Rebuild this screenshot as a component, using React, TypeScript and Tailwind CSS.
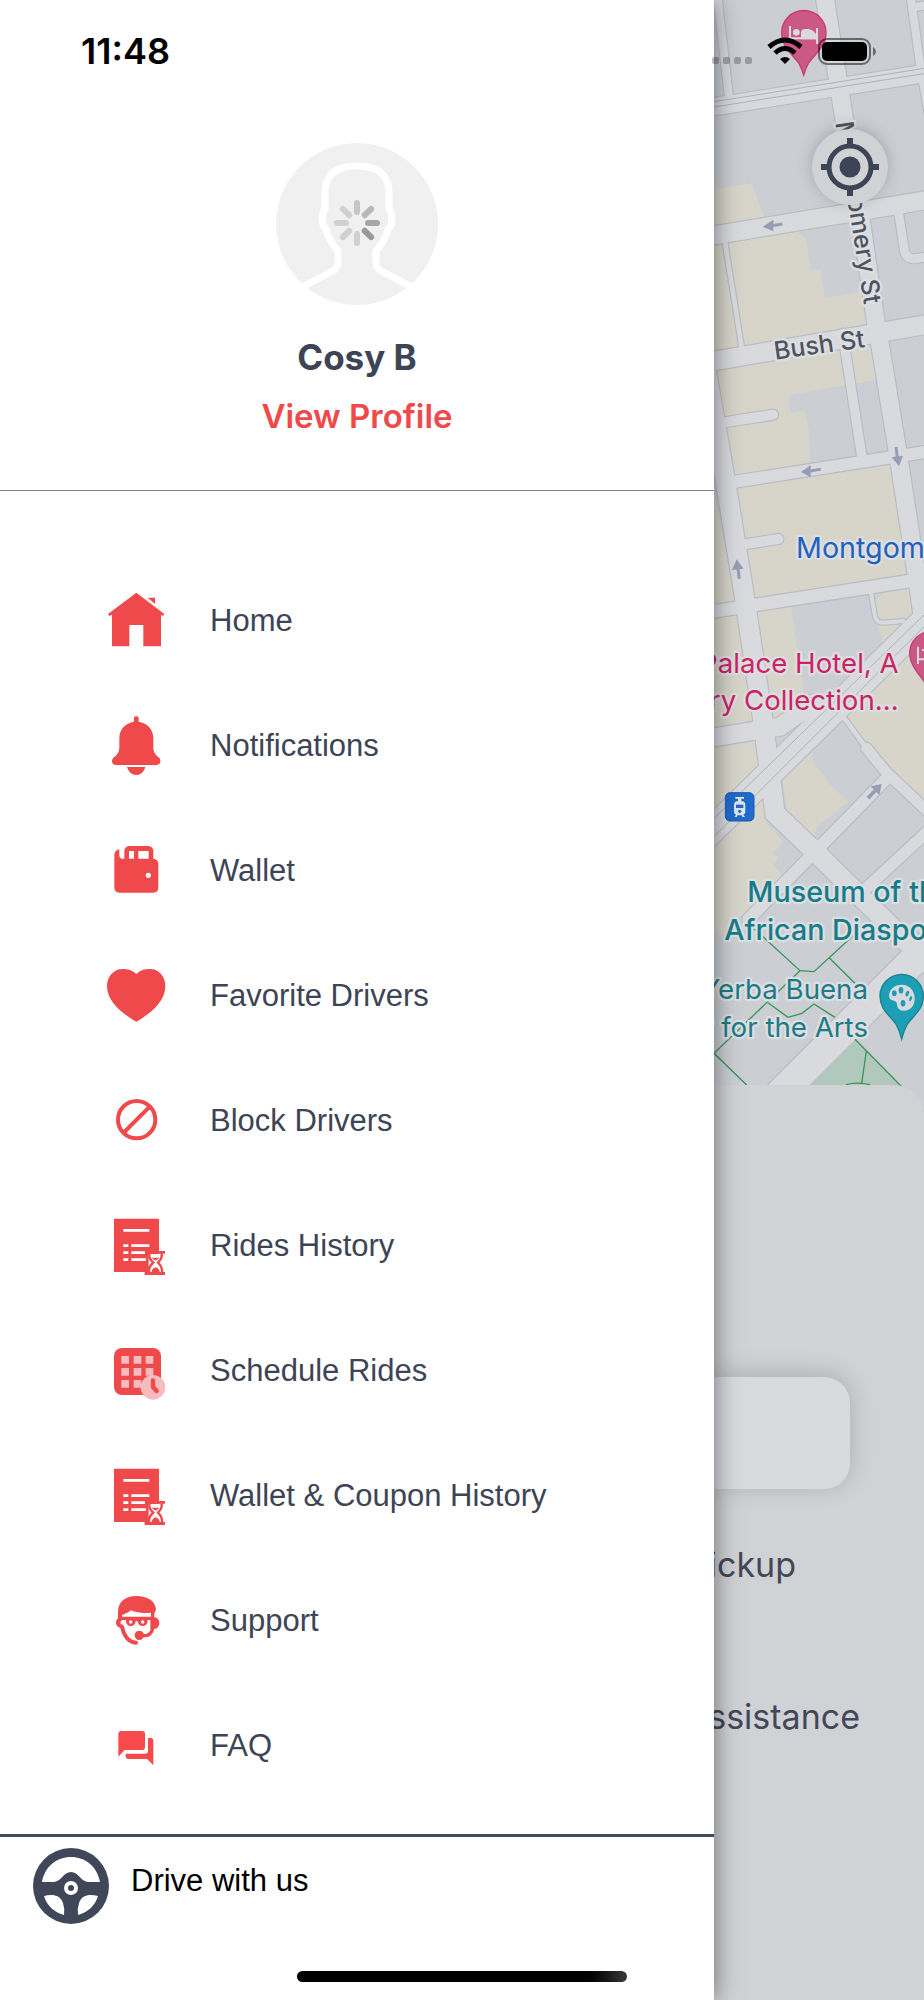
import React from "react";

const RED = "#f0494c";
const NAVY = "#3d4455";

function HomeIcon() {
  return (
    <svg viewBox="48 63 180 180" className="size-[60px] shrink-0" fill={RED} aria-hidden="true">
      <path d="M139 68 223 132 219 138 213 134V229H160V165H118V229H66V134L58 138 54 132Z" />
      <path d="M173 83H195V102Z" />
    </svg>
  );
}

function BellIcon() {
  return (
    <svg viewBox="48 438 180 180" className="size-[60px] shrink-0" fill={RED} aria-hidden="true">
      <path d="M132 455V443Q133 439 139 439T146 443V455C172 459 190 478 190 505V533C190 546 198 556 206 562Q212 567 211 575 210 585 198 585H79Q67 585 66 575 65 567 72 562C80 556 88 546 88 533V505C88 478 106 459 132 455Z" />
      <path d="M111 591H166C162 606 151 615 139 615S115 606 111 591Z" />
    </svg>
  );
}

function WalletIcon() {
  return (
    <svg viewBox="48 813 180 180" className="size-[60px] shrink-0" fill={RED} aria-hidden="true">
      <path
        fillRule="evenodd"
        d="M73 852Q75 841 88 838V857Q89 866 97 866H103V843Q104 829 118 828H175Q189 829 190 843V866Q204 868 205 881V954Q204 968 190 968H88Q74 968 73 954ZM117 843V866H132V843ZM145 843V866H176V843ZM175 908a8 8 0 1 0 .1 0Z"
      />
    </svg>
  );
}

function HeartIcon() {
  return (
    <svg viewBox="48 78 180 180" className="size-[60px] shrink-0" fill={RED} aria-hidden="true">
      <path d="M139 102C151 90 165 87 180 87 207 87 226 110 226 138 226 180 190 216 139 245 88 216 51 180 51 138 51 110 71 87 98 87 113 87 127 90 139 102Z" />
    </svg>
  );
}

function BlockIcon() {
  return (
    <svg viewBox="48 453 180 180" className="size-[60px] shrink-0" fill="none" stroke={RED} strokeWidth="12" aria-hidden="true">
      <circle cx="140" cy="539" r="56" />
      <path d="M100 579 180 499" />
    </svg>
  );
}

function HistoryIcon() {
  return (
    <svg viewBox="48 78 180 180" className="size-[60px] shrink-0" aria-hidden="true">
      <path d="M72 86H207V246H72Z" fill={RED} />
      <path d="M100 121H178M100 167H115M124 167H178M100 188H115M124 188H165M100 209H115M124 209H174" stroke="#fff" strokeWidth="8" />
      <path d="M176 192H226V247H216V250H176Z" fill="#fff" />
      <path d="M164 246H225V255H164ZM167 183H225V191H167Z" fill={RED} />
      <path d="M178 190V200Q179 208 190 218 178 228 177 238V247M215 190V200Q214 208 204 218 215 228 216 238V247" fill="none" stroke={RED} strokeWidth="7" />
      <path d="M184 203H209L197 212Z" fill={RED} />
      <path d="M185 247Q185 236 197 232 209 236 209 247Z" fill={RED} />
      <path d="M168 191H174V246H168Z" fill={RED} />
    </svg>
  );
}

function ScheduleIcon() {
  return (
    <svg viewBox="48 453 180 180" className="size-[60px] shrink-0" aria-hidden="true">
      <rect x="72" y="474" width="141" height="141" rx="24" fill={RED} />
      <g fill="#f9bcbe">
        <path d="M94 498H117V521H94ZM131 498H154V521H131ZM167 498H190V521H167ZM94 534H117V557H94ZM131 534H154V557H131ZM167 534H190V557H167ZM94 570H117V593H94ZM131 570H154V593H131Z" />
        <circle cx="189" cy="592" r="37" />
      </g>
      <path d="M189 571V591L200 603" fill="none" stroke={RED} strokeWidth="13" strokeLinecap="round" strokeLinejoin="round" />
    </svg>
  );
}

function SupportIcon() {
  return (
    <svg viewBox="48 423 180 180" className="size-[60px] shrink-0" aria-hidden="true">
      <path d="M84 504V484C85 454 107 438 139 438 172 438 194 454 196 470Q201 478 193 490V504H183V488C166 491 136 488 123 481 116 488 105 491 96 496V504Z" fill={RED} />
      <path d="M88 500H192V510H88ZM188 500Q208 502 208 518 208 536 192 537H181V504Z" fill={RED} />
      <path d="M90 502Q78 506 78 518T92 534H98V524Q91 524 91 518T98 510V502Z" fill={RED} />
      <path d="M96 530C100 554 114 577 138 578" fill="none" stroke={RED} strokeWidth="12" strokeLinecap="round" />
      <path d="M189 532Q184 556 166 557H148" fill="none" stroke={RED} strokeWidth="10" />
      <circle cx="148" cy="556" r="14" fill={RED} />
      <path d="M108 506H137V514A14 14 0 0 1 108 514ZM143 506H173V514A15 14 0 0 1 143 514ZM134 506H147V514H134Z" fill={RED} />
      <circle cx="122" cy="516" r="5" fill="#fff" />
      <circle cx="158" cy="516" r="5" fill="#fff" />
    </svg>
  );
}

function FaqIcon() {
  return (
    <svg viewBox="48 798 180 180" className="size-[60px] shrink-0" fill="#f8494c" aria-hidden="true">
      <path d="M92 843H158Q165 844 165 850V893Q164 900 158 900H104L85 920V850Q86 844 92 843Z" />
      <path d="M174 864H184Q190 865 190 872V946L171 927H114Q107 926 107 920V911H168Q174 910 174 904Z" />
    </svg>
  );
}

function WheelIcon() {
  return (
    <svg viewBox="0 0 76 76" className="size-[76px] shrink-0" aria-hidden="true">
      <circle cx="38" cy="38" r="38" fill="#404759" />
      <path d="M9 34C12 18 24 9 38 9S64 18 67 34H55C47 33 46 24 38 24S29 33 21 34Z" fill="#fff" />
      <path d="M11 48C20 46 27 47 30 55Q32 61 31 67C21 64 14 58 11 48ZM65 48C56 46 49 47 46 55Q44 61 45 67C55 64 62 58 65 48Z" fill="#fff" />
      <circle cx="38" cy="40" r="7" fill="#fff" />
      <circle cx="38" cy="40" r="3" fill="#404759" />
    </svg>
  );
}

function Avatar() {
  const spokes = ["#c6c6c6", "#b7b7b7", "#a6a6a6", "#999999", "#d0d0d0", "#d0d0d0", "#d0d0d0", "#d0d0d0"];
  return (
    <svg viewBox="0 0 162 162" className="size-[162px]" role="img" aria-label="Profile photo loading">
      <circle cx="81" cy="81" r="81" fill="#f0f0f0" />
      <path
        d="M26 144 57 128Q62 125 62 119V108C56 101 51 93 50 86 45 82 45 72 49 66V50C49 31 61 23 81 23S113 31 113 50V66C117 72 117 82 112 86 111 93 106 101 100 108V119Q100 125 105 128L136 144"
        fill="none"
        stroke="#fff"
        strokeWidth="7"
      />
      {spokes.map((color, i) => (
        <path key={i} d="M81 69V60" stroke={color} strokeWidth="6" strokeLinecap="round" transform={`rotate(${i * 45} 81 80)`} />
      ))}
    </svg>
  );
}

const menuItems = [
  { label: "Home", icon: HomeIcon },
  { label: "Notifications", icon: BellIcon },
  { label: "Wallet", icon: WalletIcon },
  { label: "Favorite Drivers", icon: HeartIcon },
  { label: "Block Drivers", icon: BlockIcon },
  { label: "Rides History", icon: HistoryIcon },
  { label: "Schedule Rides", icon: ScheduleIcon },
  { label: "Wallet & Coupon History", icon: HistoryIcon },
  { label: "Support", icon: SupportIcon },
  { label: "FAQ", icon: FaqIcon },
];

// Street centre lines and widths, in map units
const roads = [
  { d: "M52 -10 88 300", w: 24 },
  { d: "M374 -10 421 285 482 655 528 970 543 1050 593 1355 650 1725 672 1880", w: 53 },
  { d: "M30 322 700 216", w: 52 },
  { d: "M632 -10 664 220 690 360M640 22 700 12", w: 24 },
  { d: "M30 708 700 597", w: 54 },
  { d: "M73 715 128 1060", w: 14 },
  { d: "M593 620 613 750Q618 780 648 776L700 768", w: 26 },
  { d: "M30 1085 700 970", w: 56 },
  { d: "M18 1110 74 1430 135 1800 190 2170 225 2440 350 2560 700 2905", w: 58 },
  { d: "M60 1269 219 1244", w: 30 },
  { d: "M80 1449 700 1352", w: 36 },
  { d: "M428 1000 487 1380", w: 28 },
  { d: "M120 1635 235 1617", w: 30 },
  { d: "M30 1836 650 1740", w: 38 },
  { d: "M510 1760 525 1850Q530 1868 548 1868L610 1863", w: 12 },
  { d: "M30 2214 240 2180 340 2110", w: 54 },
  { d: "M710 1826 20 2506", w: 78 },
  { d: "M415 2130 500 2245", w: 14 },
  { d: "M500 2245 560 2318 700 2450", w: 32 },
  { d: "M560 2335 360 2540 145 2758", w: 36 },
  { d: "M495 2668 700 2478", w: 34 },
  { d: "M720 2802 220 3302", w: 88 },
];

const blocks = [
  "M42 568 155 550 192 650 42 680Z",
  "M42 735 290 695 318 715 333 812 362 808 375 893 490 876 505 980 42 1055Z",
  "M42 1110 520 1030 525 1140 470 1150 280 1183 265 1190 272 1238 312 1233 328 1300 330 1400 100 1440Z",
  "M107 1465 570 1393 622 1725 163 1795Z",
  "M42 1470 105 1805 42 1815Z",
  "M42 1853 113 1843 160 2160 42 2185Z",
  "M170 1833 272 1818 290 1930 308 2050 313 2130 213 2160Z",
  "M525 1800 560 1775 627 1760 637 1845 545 1940 545 1910 534 1880Z",
  "M700 1860 420 2140 425 2165 500 2240 700 2440Z",
  "M400 2165 335 2230 340 2290 385 2340 382 2345 445 2405 352 2480 342 2500 352 2522 262 2430 245 2318Z",
  "M42 2240 170 2220 177 2305 42 2445Z",
  "M42 2520 185 2380 200 2470 250 2525 220 2560 235 2575 220 2595 250 2628 110 2760 80 2820 42 2790Z",
];

function StreetMap() {
  return (
    <svg
      viewBox="42 0 630 3360"
      preserveAspectRatio="xMinYMin slice"
      className="block h-[1120px] w-full bg-[#cbcfd4]"
      fontFamily="Inter, sans-serif"
      role="img"
      aria-label="Map"
    >
      {blocks.map((d) => (
        <path key={d} d={d} fill="#d7d5ca" />
      ))}
      <path d="M465 3118 320 3265V3360H700Z" fill="#b1c9bc" />
      <path d="M490 3118 720 3350V3118Z" fill="#cbcfd4" />
      <path d="M400 2165 335 2230 340 2290 385 2340 445 2405 520 2330 500 2280Z" fill="#cbcfd4" />
      <g fill="none" stroke="#b9bcc4" strokeLinecap="round">
        {roads.map((r) => (
          <path key={r.d} d={r.d} strokeWidth={r.w + 7} />
        ))}
      </g>
      <g fill="none" stroke="#d9dade" strokeLinecap="round">
        {roads.map((r) => (
          <path key={r.d} d={r.d} strokeWidth={r.w} />
        ))}
      </g>
      <path d="M42 305 672 205M42 321 672 221M700 1818 42 2455M700 1852 42 2510" stroke="#b0b2b8" strokeWidth="3" />

      {/* Garden paths */}
      <g fill="none" stroke="#3a9559" strokeWidth="4">
        <path d="M150 2775 300 2912 342 2915 500 2770M386 2872 470 2955M300 2912 42 3160 140 3255M204 3008 264 3052 306 3040 342 3012 405 3052M465 3118 605 3260M499 3153 485 3250M438 3254Q470 3245 510 3254" />
      </g>

      {/* One-way arrows */}
      <g stroke="#979db5" fill="#979db5">
        <path d="M247 672 215 677" strokeWidth="9" />
        <path d="M188 680 220 659V694Z" stroke="none" />
        <path d="M362 1408 330 1413" strokeWidth="9" />
        <path d="M303 1416 332 1395V1432Z" stroke="none" />
        <path d="M588 1341 592 1372" strokeWidth="9" />
        <path d="M597 1399 575 1372 609 1367Z" stroke="none" />
        <path d="M118 1737 114 1705" strokeWidth="9" />
        <path d="M110 1678 96 1710 131 1706Z" stroke="none" />
        <path d="M504 2395 530 2367" strokeWidth="11" />
        <path d="M545 2352 512 2359 538 2385Z" stroke="none" />
      </g>

      {/* Hotel pins */}
      <g>
        <path d="M311 225Q305 205 297 190C275 160 245 140 245 98A66 66 0 0 1 378 98C378 140 346 160 325 190Q317 205 311 225Z" fill="#cc5985" stroke="#c93a72" strokeWidth="4" />
        <path d="M270 78V126M270 115H352M351 84V132" fill="none" stroke="#d9dade" strokeWidth="6" />
        <path d="M303 106Q301 87 315 87H326Q345 92 350 108V118H303Z" fill="#d9dade" />
        <circle cx="289" cy="97" r="10" fill="#d9dade" />
        <path d="M695 2087C690 2050 629 2010 629 1960A66 66 0 0 1 761 1960Z" fill="#cc5985" stroke="#c93a72" strokeWidth="4" />
        <path d="M654 1940V1992M654 1978H700M666 1950H700" stroke="#d9dade" strokeWidth="6" />
      </g>

      {/* Museum pin */}
      <path d="M605 3117Q598 3090 588 3072C566 3042 540 3028 540 2988A65 65 0 0 1 670 2988C670 3028 645 3042 622 3072Q612 3090 605 3117Z" fill="#1c9fb5" stroke="#15848f" strokeWidth="4" />
      <path d="M605 2954C630 2954 645 2974 644 2998 643 3020 630 3032 612 3032 592 3032 592 3018 590 3008 586 3000 568 3004 567 2988 567 2968 585 2954 605 2954Z" fill="#d9dade" />
      <g fill="#1c9fb5">
        <ellipse cx="583" cy="2980" rx="7" ry="9" />
        <ellipse cx="603" cy="2971" rx="7" ry="10" />
        <ellipse cx="622" cy="2981" rx="5" ry="9" transform="rotate(20 622 2981)" />
        <ellipse cx="632" cy="2996" rx="4" ry="8" transform="rotate(20 632 2996)" />
        <ellipse cx="609" cy="3010" rx="7" ry="10" />
      </g>

      {/* Tram stop */}
      <rect x="76" y="2378" width="86" height="85" rx="14" fill="#206acb" stroke="#1a5bb5" strokeWidth="3" />
      <path d="M106 2391H132V2396H124V2404H128Q137 2406 136 2418V2436Q135 2442 130 2444L135 2451H128L125 2446H113L110 2451H103L108 2444Q103 2442 102 2436V2418Q101 2406 110 2404H114V2396H106Z" fill="#dfe3ea" />
      <path d="M108 2414H130V2424H108Z" fill="#206acb" />
      <circle cx="119" cy="2434" r="5" fill="#206acb" />

      <g stroke="#dddee2" strokeWidth="14" strokeLinejoin="round" paintOrder="stroke" fontSize="83">
        <g fill="#4d545e" fontSize="75" fontWeight="500">
          <text x="226" y="1079" transform="rotate(-8 226 1079)">Bush St</text>
          <text x="406" y="368" transform="rotate(81 406 368)">Montgomery St</text>
        </g>
        <text x="288" y="1675" fontSize="86" fill="#1f62bf">Montgomery St</text>
        <g fill="#cc2463" textAnchor="end">
          <text x="596" y="2019">Palace Hotel, A</text>
          <text x="596" y="2131">Luxury Collection...</text>
        </g>
        <g fill="#157d88" fontSize="86" fontWeight="500">
          <text x="142" y="2707">Museum of the</text>
          <text x="73" y="2819">African Diaspora</text>
        </g>
        <g fill="#1b7c87" textAnchor="end">
          <text x="504" y="2998">Yerba Buena</text>
          <text x="504" y="3110">Center for the Arts</text>
        </g>
      </g>
    </svg>
  );
}

function StatusBar() {
  return (
    <div className="pointer-events-none absolute inset-x-0 top-0 z-20 flex h-[101px] items-center justify-between pl-[81px] pr-[48px]">
      <span className="text-[36px] font-semibold leading-[40px] text-black">11:48</span>
      <svg viewBox="0 0 166 30" className="h-[30px] w-[166px]" role="img" aria-label="Wi-Fi connected, battery full">
        <g fill="#000" fillOpacity="0.25">
          <rect x="2" y="21" width="7" height="7" rx="2" />
          <rect x="13" y="21" width="7" height="7" rx="2" />
          <rect x="24" y="21" width="7" height="7" rx="2" />
          <rect x="35" y="21" width="7" height="7" rx="2" />
        </g>
        <path d="M59 11Q75 -3 91 11M65 17Q75 8 85 17" fill="none" stroke="#000" strokeWidth="5" />
        <path d="M70 23Q75 19 80 23L75 28Z" />
        <rect x="109" y="3" width="51" height="25" rx="8" fill="none" stroke="#000" strokeOpacity="0.5" strokeWidth="2" />
        <rect x="112" y="6" width="45" height="19" rx="5" />
        <path d="M163 11Q166 13 166 15.500T163 20Z" fillOpacity="0.5" />
      </svg>
    </div>
  );
}

function RideScreen() {
  return (
    <main className="flex min-w-0 flex-col overflow-hidden bg-[#cbcfd4] text-[#414858]">
      <div className="relative">
        <StreetMap />
        <button
          type="button"
          aria-label="Center on my location"
          className="absolute right-[36px] top-[129px] flex size-[76px] items-center justify-center rounded-full bg-[#d1d2d6] shadow-[0_-2px_16px_rgba(0,0,0,0.2)]"
        >
          <svg viewBox="0 0 58 58" className="size-[58px]" fill="none" stroke={NAVY} aria-hidden="true">
            <circle cx="29" cy="29" r="21" strokeWidth="5" />
            <circle cx="29" cy="29" r="10.500" fill={NAVY} stroke="none" />
            <path d="M29 0V10M29 48V58M0 29H10M48 29H58" strokeWidth="6" />
          </svg>
        </button>
      </div>
      <section className="relative -mt-[35px] flex-1 rounded-tr-[30px] bg-[#d1d2d5] pt-[292px]">
        <div className="mr-[74px] h-[112px] rounded-r-[26px] bg-[#d9dade] shadow-[0_-3px_24px_rgba(0,0,0,0.18)]" />
        <div className="mt-[54px] flex w-[82px] justify-end text-[34px] leading-[44px]">Pickup</div>
        <div className="mt-[108px] flex w-[146px] justify-end text-[34px] leading-[44px]">Assistance</div>
      </section>
    </main>
  );
}

export default function App() {
  return (
    <div className="relative grid min-h-screen grid-cols-[17fr_5fr] bg-white font-['Inter',sans-serif]">
      <StatusBar />

      {/* Drawer */}
      <aside className="relative z-10 flex min-w-0 flex-col bg-white shadow-[0_0_24px_rgba(0,0,0,0.5)]">
        <header className="flex flex-col items-center border-b border-[#7c7f93] pb-[54px] pt-[143px]">
          <Avatar />
          <h1 className="mt-[31px] text-[35px] font-bold leading-[42px] text-[#3d4455]">Cosy B</h1>
          <a href="#profile" className="mt-[18px] text-[33px] font-semibold leading-[40px] text-[#f0494c]">
            View Profile
          </a>
        </header>

        <nav className="pt-[67px] font-['Liberation_Sans',sans-serif]">
          {menuItems.map(({ label, icon: Icon }) => (
            <a
              key={label}
              href="#menu"
              className="flex h-[125px] items-center gap-[44px] pl-[106px] text-[31px] leading-[36px] text-[#3d4455]"
            >
              <Icon />
              {label}
            </a>
          ))}
        </nav>

        <a
          href="#drive"
          className="mt-[26px] flex items-start gap-[22px] border-t-[3px] border-[#414b5b] pl-[33px] pt-[11px] font-['Liberation_Sans',sans-serif] text-[31px] leading-[36px] text-black"
        >
          <WheelIcon />
          <span className="pt-[15px]">Drive with us</span>
        </a>
      </aside>

      <RideScreen />

      {/* Home indicator */}
      <div className="absolute bottom-[18px] left-1/2 z-20 h-[11px] w-[330px] -translate-x-1/2 rounded-full bg-linear-to-r from-black from-85% to-[#3a3a3a]" />
    </div>
  );
}
